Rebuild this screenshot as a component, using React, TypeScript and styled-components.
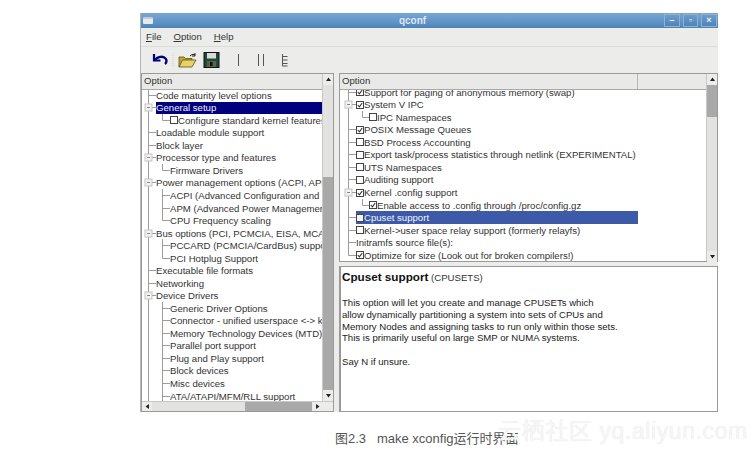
import React from "react";
import styled, { createGlobalStyle } from "styled-components";

const Global = createGlobalStyle`
  html, body { margin: 0; padding: 0; background: #fff; }
  body { font-family: "Liberation Sans", Arial, sans-serif; overflow: hidden; }
`;

const Page = styled.div`
  position: relative;
  width: 755px;
  height: 455px;
  padding: 13px 0 0 140px;
  box-sizing: border-box;
  overflow: hidden;
`;
const Window = styled.div`
  width: 578px;
  height: 399px;
  background: #ececea;
  display: flex;
  flex-direction: column;
  box-sizing: border-box;
  border-left: 1px solid #b5b5b5;
`;
const TitleBar = styled.div`
  height: 15px;
  flex: none;
  background: linear-gradient(#78a7d2, #5b90c4 70%, #4d82b8);
  display: flex;
  align-items: center;
  padding: 0 1px 0 2px;
  gap: 3px;
  color: #e8eef4;
`;
const TitleIcon = styled.div`
  width: 10px;
  height: 7px;
  background: #e6e9ee;
  border-top: 2px solid #c2cad6;
  box-sizing: border-box;
  border-radius: 1px;
`;
const TitleText = styled.div`
  flex: 1;
  text-align: center;
  font-size: 10px;
  font-weight: 700;
  padding-left: 8px;
  color: #dfe7ee;
`;
const WinButton = styled.div<{ $w: number }>`
  width: ${(p) => p.$w}px;
  height: 13px;
  background: linear-gradient(#6f9cc8, #4f84ba);
  border: 1px solid #8fb2d4;
  box-sizing: border-box;
  display: flex;
  align-items: center;
  justify-content: center;
  color: #eef3f7;
  font-size: 9px;
  font-weight: 700;
  line-height: 1;
`;
const MenuBar = styled.div`
  height: 19px;
  flex: none;
  box-sizing: border-box;
  display: flex;
  align-items: center;
  gap: 12px;
  padding: 0 0 2px 5px;
  font-size: 9.6px;
  color: #333;
  border-bottom: 1px solid #dcdcda;
`;
const MenuItem = styled.span`
  &::first-letter { text-decoration: underline; }
`;
const ToolBar = styled.div`
  height: 25px;
  flex: none;
  display: flex;
  align-items: center;
  padding: 0 0 1px 11px;
`;
const Panes = styled.div`
  flex: 1;
  min-height: 0;
  display: flex;
  gap: 5px;
`;
const LeftPane = styled.div`
  width: 193px;
  flex: none;
  display: flex;
  flex-direction: column;
  border: 1px solid #9a9a9a;
  box-sizing: border-box;
  background: #fff;
`;
const RightColumn = styled.div`
  flex: 1;
  min-width: 0;
  display: flex;
  flex-direction: column;
  gap: 4px;
`;
const RightPane = styled.div`
  height: 189px;
  flex: none;
  display: flex;
  border: 1px solid #9a9a9a;
  box-sizing: border-box;
  background: #fff;
`;
const PaneBody = styled.div`
  flex: 1;
  min-height: 0;
  display: flex;
`;
const ListColumn = styled.div`
  flex: 1;
  min-width: 0;
  display: flex;
  flex-direction: column;
`;
const Header = styled.div`
  height: 15px;
  flex: none;
  background: #e9e9e7;
  border-bottom: 1px solid #a8a8a8;
  display: flex;
  font-size: 9.6px;
  color: #333;
  line-height: 14px;
  position: relative;
  z-index: 1;
`;
const HeaderCell = styled.div<{ $w?: number }>`
  ${(p) => (p.$w ? `width: ${p.$w}px; flex: none; border-right: 1px solid #b5b5b5;` : "flex: 1;")}
  padding-left: 2px;
  box-sizing: border-box;
`;
const List = styled.div<{ $shift: number; $w?: number }>`
  flex: 1;
  min-height: 0;
  overflow: hidden;
  margin-top: ${(p) => p.$shift}px;
  ${(p) => (p.$w ? `width: ${p.$w}px;` : "")}
`;
const RowBox = styled.div`
  height: 12.54px;
  display: flex;
  align-items: center;
  font-size: 9.6px;
  color: #333;
  white-space: nowrap;
  overflow: hidden;
`;
const RowLabel = styled.div<{ $sel?: string }>`
  flex: 1;
  min-width: 0;
  height: 100%;
  display: flex;
  align-items: center;
  overflow: hidden;
  background: ${(p) => p.$sel || "transparent"};
  color: ${(p) => (p.$sel ? "#f2f2f8" : "#333")};
`;
const Check = styled.svg`
  flex: none;
  margin-right: 0;
`;
const VBar = styled.div`
  width: 11px;
  flex: none;
  display: flex;
  flex-direction: column;
  background: #a9a9a9;
  border-left: 1px solid #c8c8c8;
  box-sizing: border-box;
`;
const HBar = styled.div`
  height: 10px;
  flex: none;
  display: flex;
  background: #a9a9a9;
  border-top: 1px solid #c8c8c8;
  box-sizing: border-box;
`;
const ArrowBtn = styled.div<{ $h?: number; $w?: number }>`
  flex: none;
  height: ${(p) => (p.$h ? `${p.$h}px` : "100%")};
  width: ${(p) => (p.$w ? `${p.$w}px` : "100%")};
  background: #ececea;
  display: flex;
  align-items: center;
  justify-content: center;
`;
const Thumb = styled.div<{ $size: number; $dir: "v" | "h" }>`
  flex: none;
  background: #e2e2e0;
  ${(p) => (p.$dir === "v" ? `height: ${p.$size}px;` : `width: ${p.$size}px;`)}
`;
const Spacer = styled.div<{ $size?: number }>`
  ${(p) => (p.$size ? `flex: none; height: ${p.$size}px;` : "flex: 1;")}
`;
const Corner = styled.div`
  width: 11px;
  flex: none;
  background: #ececea;
`;
const Info = styled.div`
  flex: 1;
  min-height: 0;
  background: #fff;
  border: 1px solid #9a9a9a;
  border-left-width: 2px;
  box-sizing: border-box;
  padding: 2px 0 0 1px;
  font-size: 9.6px;
  line-height: 11.75px;
  color: #222;
`;
const InfoTitle = styled.div`
  line-height: 15px;
  margin-bottom: 12px;
  b { font-weight: 700; font-size: 11.7px; color: #111; }
  span { font-size: 9.6px; color: #333; }
`;
const InfoPara = styled.p`
  margin: 0 0 12px;
`;
const Caption = styled.div`
  margin: 18px 0 0 195px;
  font-family: "Liberation Sans", "Noto Sans CJK SC", sans-serif;
  font-size: 13px;
  line-height: 17px;
  color: #555;
  white-space: pre;
`;
const Watermark = styled.div`
  position: absolute;
  left: 498px;
  top: 418px;
  font-family: "Liberation Sans", "Noto Sans CJK SC", sans-serif;
  font-size: 23px;
  line-height: 26px;
  letter-spacing: 0.6px;
  color: #f6f6f6;
  text-shadow: 0 0 1px #e2e2e2;
  white-space: nowrap;
`;

const Arrow = ({ dir }: { dir: "u" | "d" | "l" | "r" }) => {
  const pts = { u: "3.5,1.5 1,5 6,5", d: "1,2 6,2 3.5,5.5", l: "5,1 5,6 1.5,3.5", r: "2,1 2,6 5.5,3.5" }[dir];
  return (
    <svg width="7" height="7" viewBox="0 0 7 7">
      <polygon points={pts} fill="#222" />
    </svg>
  );
};

type Node = {
  t: string;
  d: 0 | 1;
  exp?: boolean;
  lastChild?: boolean;
  chk?: "on" | "off";
  sel?: string;
  lastTop?: boolean;
};

const Guide = ({ n, w, x0, x1 }: { n: Node; w: number; x0: number; x1: number }) => {
  const h = 13;
  const c = 6.5;
  return (
    <svg width={w} height={h} viewBox={`0 0 ${w} ${h}`} style={{ flex: "none" }}>
      <g stroke="#9c9c9c" strokeWidth="1" fill="none">
        <path d={`M${x0 + 0.5} 0V${n.lastTop ? c : h}`} />
        {n.d === 0 && <path d={`M${x0 + 0.5} ${c}H${w}`} />}
        {n.d === 1 && <path d={`M${x1 + 0.5} 0V${n.lastChild ? c : h}M${x1 + 0.5} ${c}H${w}`} />}
      </g>
      {n.exp && (
        <g>
          <rect x={x0 - 3} y={c - 3.5} width="7" height="7" fill="#f2f2f2" stroke="#c4c4c4" />
          <path d={`M${x0 - 1} ${c}H${x0 + 2}`} stroke="#888" />
        </g>
      )}
    </svg>
  );
};

const CheckBox = ({ on, inv }: { on: boolean; inv?: boolean }) => (
  <Check width="8" height="8" viewBox="0 0 8 8">
    <rect x="0.5" y="0.5" width="7" height="7" fill={inv ? "#f4f4f4" : "#fff"} stroke="#444" />
    {on && <path d="M1.8 4 L3.4 5.8 L6.2 2" stroke="#333" strokeWidth="1.1" fill="none" />}
  </Check>
);

const Row = ({ n, w0, w1, x0, x1 }: { n: Node; w0: number; w1: number; x0: number; x1: number }) => (
  <RowBox>
    <Guide n={n} w={n.d === 0 ? w0 : w1} x0={x0} x1={x1} />
    <RowLabel $sel={n.sel}>
      {n.chk && <CheckBox on={n.chk === "on"} inv={!!n.sel} />}
      {n.t}
    </RowLabel>
  </RowBox>
);

const leftRows: Node[] = [
  { t: "Code maturity level options", d: 0 },
  { t: "General setup", d: 0, exp: true, sel: "#00007f" },
  { t: "Configure standard kernel features", d: 1, lastChild: true, chk: "off" },
  { t: "Loadable module support", d: 0 },
  { t: "Block layer", d: 0 },
  { t: "Processor type and features", d: 0, exp: true },
  { t: "Firmware Drivers", d: 1, lastChild: true },
  { t: "Power management options (ACPI, APM)", d: 0, exp: true },
  { t: "ACPI (Advanced Configuration and Power Interface)", d: 1 },
  { t: "APM (Advanced Power Management)", d: 1 },
  { t: "CPU Frequency scaling", d: 1, lastChild: true },
  { t: "Bus options (PCI, PCMCIA, EISA, MCA, ISA)", d: 0, exp: true },
  { t: "PCCARD (PCMCIA/CardBus) support", d: 1 },
  { t: "PCI Hotplug Support", d: 1, lastChild: true },
  { t: "Executable file formats", d: 0 },
  { t: "Networking", d: 0 },
  { t: "Device Drivers", d: 0, exp: true },
  { t: "Generic Driver Options", d: 1 },
  { t: "Connector - unified userspace <-> kernelspace", d: 1 },
  { t: "Memory Technology Devices (MTD)", d: 1 },
  { t: "Parallel port support", d: 1 },
  { t: "Plug and Play support", d: 1 },
  { t: "Block devices", d: 1 },
  { t: "Misc devices", d: 1 },
  { t: "ATA/ATAPI/MFM/RLL support", d: 1 },
];

const rightRows: Node[] = [
  { t: "Support for paging of anonymous memory (swap)", d: 0, chk: "on" },
  { t: "System V IPC", d: 0, exp: true, chk: "on" },
  { t: "IPC Namespaces", d: 1, lastChild: true, chk: "off" },
  { t: "POSIX Message Queues", d: 0, chk: "on" },
  { t: "BSD Process Accounting", d: 0, chk: "off" },
  { t: "Export task/process statistics through netlink (EXPERIMENTAL)", d: 0, chk: "off" },
  { t: "UTS Namespaces", d: 0, chk: "off" },
  { t: "Auditing support", d: 0, chk: "off" },
  { t: "Kernel .config support", d: 0, exp: true, chk: "on" },
  { t: "Enable access to .config through /proc/config.gz", d: 1, lastChild: true, chk: "on" },
  { t: "Cpuset support", d: 0, chk: "off", sel: "#3c5aa8" },
  { t: "Kernel->user space relay support (formerly relayfs)", d: 0, chk: "off" },
  { t: "Initramfs source file(s):", d: 0 },
  { t: "Optimize for size (Look out for broken compilers!)", d: 0, chk: "on", lastTop: true },
];

const ToolbarIcons = () => (
  <svg width="150" height="20" viewBox="0 0 150 20">
    <path d="M2 4v6.5h6.5" fill="none" stroke="#00007f" strokeWidth="2.2" />
    <path d="M2.5 10.5C5.5 6 11 6 13.5 8.5c1.6 1.8 1.2 4-.5 5.5" fill="none" stroke="#00007f" strokeWidth="2.4" />
    <path d="M21 3v14" stroke="#cfcfcf" strokeDasharray="1 1" />
    <path d="M27 7h5l1.5 1.5H40V11H31L27 17Z" fill="#c8a23a" stroke="#5e5013" strokeWidth=".8" />
    <path d="M27 17l3.5-7H44l-4 7Z" fill="#e6d36a" stroke="#5e5013" strokeWidth=".8" />
    <path d="M38 6c2-2 4-2 5-1M43 3v3h-3" fill="none" stroke="#1d1d1d" strokeWidth="1" />
    <rect x="52" y="2.5" width="15" height="15" fill="#1f4a3c" stroke="#111" />
    <rect x="55" y="3" width="9" height="5.5" fill="#d8dfd8" />
    <rect x="55" y="11" width="9" height="6" fill="#56634f" />
    <rect x="58" y="12" width="2.5" height="4" fill="#111" />
    <path d="M86.5 4v12M106.5 4v12M111.5 4v12" stroke="#555" strokeWidth="1" />
    <path d="M130.5 4v12M130.5 6.5h5M130.5 10h5M130.5 13.5h5M130.5 16h5" stroke="#555" strokeWidth="1" fill="none" />
  </svg>
);

export default function App() {
  return (
    <Page>
      <Global />
      <Window>
        <TitleBar>
          <TitleIcon />
          <TitleText>qconf</TitleText>
          <WinButton $w={16}>–</WinButton>
          <WinButton $w={15}>▫</WinButton>
          <WinButton $w={16}>×</WinButton>
        </TitleBar>
        <MenuBar>
          <MenuItem>File</MenuItem>
          <MenuItem>Option</MenuItem>
          <MenuItem>Help</MenuItem>
        </MenuBar>
        <ToolBar>
          <ToolbarIcons />
        </ToolBar>
        <Panes>
          <LeftPane>
            <PaneBody>
              <ListColumn>
                <Header>
                  <HeaderCell>Option</HeaderCell>
                </Header>
                <List $shift={-1}>
                  {leftRows.map((n) => (
                    <Row key={n.t} n={n} w0={14} w1={28} x0={6} x1={20} />
                  ))}
                </List>
              </ListColumn>
              <VBar>
                <ArrowBtn $h={11}>
                  <Arrow dir="u" />
                </ArrowBtn>
                <Thumb $dir="v" $size={92} />
                <Spacer />
                <ArrowBtn $h={11}>
                  <Arrow dir="d" />
                </ArrowBtn>
              </VBar>
            </PaneBody>
            <HBar>
              <ArrowBtn $w={10}>
                <Arrow dir="l" />
              </ArrowBtn>
              <Thumb $dir="h" $size={93} />
              <Spacer />
              <ArrowBtn $w={10}>
                <Arrow dir="r" />
              </ArrowBtn>
              <Corner />
            </HBar>
          </LeftPane>
          <RightColumn>
            <RightPane>
              <ListColumn>
                <Header>
                  <HeaderCell $w={298}>Option</HeaderCell>
                  <HeaderCell />
                </Header>
                <List $shift={-4} $w={298}>
                  {rightRows.map((n) => (
                    <Row key={n.t} n={n} w0={16} w1={29} x0={8} x1={22} />
                  ))}
                </List>
              </ListColumn>
              <VBar>
                <ArrowBtn $h={11}>
                  <Arrow dir="u" />
                </ArrowBtn>
                <Spacer $size={32} />
                <Thumb $dir="v" $size={134} />
                <ArrowBtn $h={11}>
                  <Arrow dir="d" />
                </ArrowBtn>
              </VBar>
            </RightPane>
            <Info>
              <InfoTitle>
                <b>Cpuset support</b> <span>(CPUSETS)</span>
              </InfoTitle>
              <InfoPara>
                This option will let you create and manage CPUSETs which
                <br />
                allow dynamically partitioning a system into sets of CPUs and
                <br />
                Memory Nodes and assigning tasks to run only within those sets.
                <br />
                This is primarily useful on large SMP or NUMA systems.
              </InfoPara>
              <InfoPara>Say N if unsure.</InfoPara>
            </Info>
          </RightColumn>
        </Panes>
      </Window>
      <Caption>图2.3   make xconfig运行时界面</Caption>
      <Watermark>云栖社区 yq.aliyun.com</Watermark>
    </Page>
  );
}
